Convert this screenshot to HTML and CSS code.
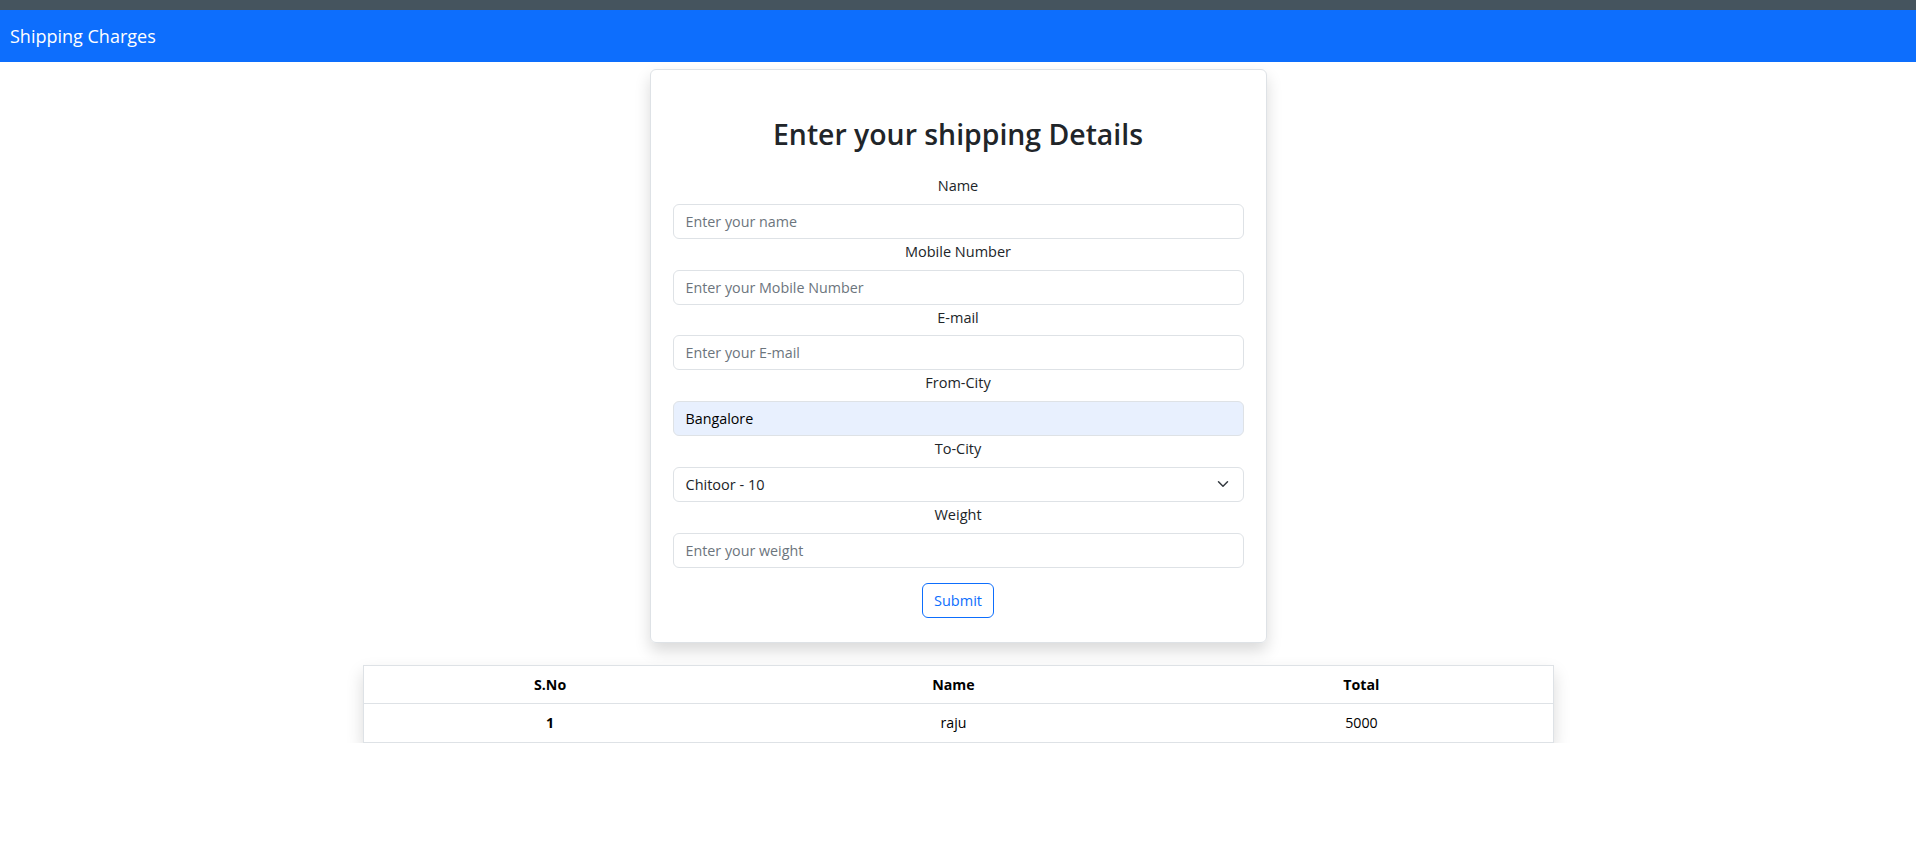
FILE: index.html
```html
<!DOCTYPE html>
<html lang="en">
<head>
<meta charset="utf-8">
<title>Shipping Charges</title>
<link rel="stylesheet" href="styles.css">
</head>
<body>
<div class="topstrip"></div>
<nav class="navbar"><span class="brand">Shipping Charges</span></nav>
<main class="page">
  <form class="card">
    <h2 class="title">Enter your shipping Details</h2>
    <div class="group">
      <label class="label">Name</label>
      <input class="control" type="text" placeholder="Enter your name">
    </div>
    <div class="group">
      <label class="label">Mobile Number</label>
      <input class="control" type="text" placeholder="Enter your Mobile Number">
    </div>
    <div class="group">
      <label class="label">E-mail</label>
      <input class="control" type="text" placeholder="Enter your E-mail">
    </div>
    <div class="group">
      <label class="label">From-City</label>
      <input class="control autofill" type="text" value="Bangalore">
    </div>
    <div class="group">
      <label class="label">To-City</label>
      <div class="select">
        <span>Chitoor - 10</span>
        <svg class="chev" width="16" height="12" viewBox="0 0 16 16"><path d="m2 5 6 6 6-6" fill="none" stroke="#343a40" stroke-width="2" stroke-linecap="round" stroke-linejoin="round"/></svg>
      </div>
    </div>
    <div class="group">
      <label class="label">Weight</label>
      <input class="control" type="text" placeholder="Enter your weight">
    </div>
    <div class="actions"><button class="btn" type="button">Submit</button></div>
  </form>

  <div class="table-wrap">
    <table class="table">
      <thead>
        <tr><th class="c1">S.No</th><th class="c2">Name</th><th class="c3">Total</th></tr>
      </thead>
      <tbody>
        <tr><th class="c1">1</th><td class="c2">raju</td><td class="c3">5000</td></tr>
      </tbody>
    </table>
  </div>
</main>
</body>
</html>
```

FILE: styles.css
```css
* { box-sizing: border-box; }
html, body { margin: 0; padding: 0; background: #fff; }
body {
  font-family: "Open Sans", "Noto Sans", "Liberation Sans", sans-serif;
  color: #212529;
  font-size: 14.5px;
}
.topstrip { height: 10px; background: #45545e; }
.navbar {
  height: 52px;
  background: #0d6efd;
  display: flex;
  align-items: center;
  padding-left: 10px;
}
.brand { color: #fff; font-size: 18px; }
.page {
  display: flex;
  flex-direction: column;
  align-items: center;
  padding-top: 7px;
}
.card {
  width: 617px;
  border: 1px solid #dee2e6;
  border-radius: 6px;
  padding: 0 22px 24px;
  box-shadow: 0 8px 16px rgba(0,0,0,0.15);
  display: flex;
  flex-direction: column;
}
.title {
  margin: 47px 0 21px;
  font-size: 28.4px;
  line-height: 35px;
  font-weight: 600;
  text-align: center;
  color: #212529;
}
.group { display: flex; flex-direction: column; }
.label {
  display: block;
  text-align: center;
  line-height: 22px;
  padding-top: 2px;
  margin-bottom: 6.8px;
  font-size: 14.5px;
}
.control, .select {
  height: 35px;
  width: 100%;
  border: 1px solid #dee2e6;
  border-radius: 6px;
  padding: 0 12px;
  font-family: inherit;
  font-size: 14.3px;
  color: #212529;
  background: #fff;
  outline: none;
}
.select { font-size: 14.5px; }
.control::placeholder { color: #6c757d; opacity: 1; }
.control.autofill { background: #e8f0fe; color: #000; }
.select {
  display: flex;
  align-items: center;
  justify-content: space-between;
}
.actions { display: flex; justify-content: center; margin-top: 15px; }
.btn {
  width: 72px;
  height: 35px;
  border: 1px solid #0d6efd;
  border-radius: 6px;
  background: #fff;
  color: #0d6efd;
  font-family: inherit;
  font-size: 14.5px;
  padding: 0;
}
.table-wrap {
  margin-top: 22px;
  width: 1191px;
  box-shadow: 0 8px 16px rgba(0,0,0,0.15);
}
.table {
  width: 100%;
  border-collapse: collapse;
  border: 1px solid #dee2e6;
  background: #fff;
  font-size: 14.2px;
  color: #000;
}
.table th, .table td {
  border-bottom: 1px solid #dee2e6;
  text-align: center;
  padding: 0;
}
.table thead tr { height: 38px; }
.table tbody tr { height: 39px; }
.table th { font-weight: 700; }
.table td { font-weight: 400; }
.c1 { width: 374px; }
.c2 { width: 434px; }
.c3 { width: 383px; }
```
